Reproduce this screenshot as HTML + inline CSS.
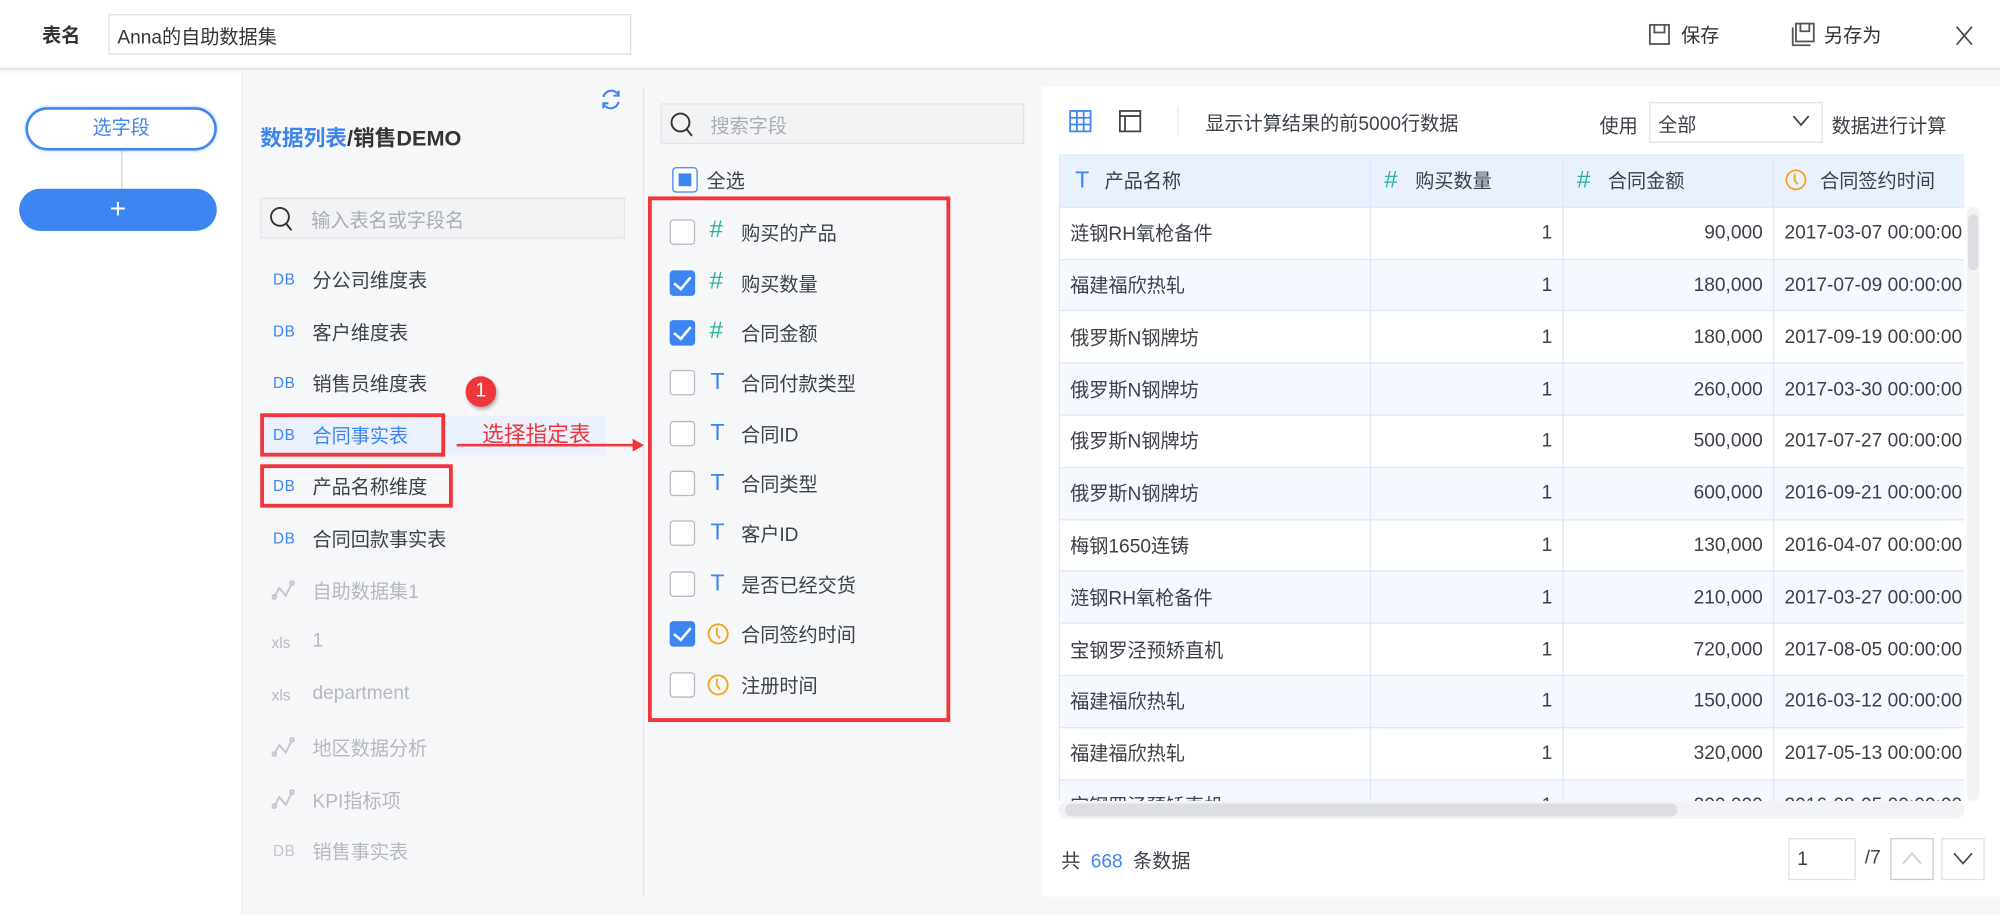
<!DOCTYPE html>
<html><head><meta charset="utf-8"><style>
*{margin:0;padding:0;box-sizing:border-box}
html,body{width:2000px;height:915px;overflow:hidden;background:#fff}
#w{position:absolute;left:0;top:0;width:1568px;height:717px;transform:scale(1.27551);transform-origin:0 0;font-family:"Liberation Sans","Noto Sans CJK SC",sans-serif;color:#3c4048;font-size:15px;background:#f6f7f9}
.a{position:absolute;white-space:nowrap}
.hdr{left:0;top:0;width:1568px;height:55px;background:#fff;border-bottom:2px solid #e6e7ea}
.ck{position:absolute;width:20px;height:20px;border:1.5px solid #b5b9c2;border-radius:3px;background:#fff}
.ck.on{background:#3d85f0;border-color:#3d85f0}
.ck.on::after{content:"";position:absolute;left:5px;top:1px;width:6px;height:11px;border-right:2.5px solid #fff;border-bottom:2.5px solid #fff;transform:rotate(40deg)}
.db{color:#3d85f0;font-size:12px;letter-spacing:0.5px}
.gray{color:#b5b8be}
.hs{color:#28b39a;font-size:19px;font-style:italic}
.tt{color:#3d85f0;font-size:18px}
table{border-collapse:collapse;table-layout:fixed}
td,th{border:1.5px solid #dbe7fa;height:40.8px;padding:0 8px;font-weight:normal;font-size:15px;white-space:nowrap;overflow:hidden}
th{background:#e8f1fd;text-align:left}
tr:nth-child(odd) td{background:#f5f8fe}
.r{text-align:right}
.red{border:3px solid #f0363a;position:absolute}
</style></head><body><div id="w">
<div class="a hdr"></div>
<div class="a" style="left:33px;top:17px;font-weight:bold;font-size:15px;color:#333">表名</div>
<div class="a" style="left:85px;top:11px;width:410px;height:32px;border:1px solid #dfe1e5;background:#fff;padding:6px 6px;font-size:15px;color:#333">Anna的自助数据集</div>
<svg class="a" style="left:1292px;top:18px" width="18" height="18" viewBox="0 0 18 18" fill="none" stroke="#555" stroke-width="1.4"><rect x="1.5" y="1.5" width="15" height="15"/><path d="M5 1.5v6h8v-6"/></svg>
<div class="a" style="left:1318px;top:17px;color:#333">保存</div>
<svg class="a" style="left:1404px;top:17px" width="20" height="20" viewBox="0 0 20 20" fill="none" stroke="#555" stroke-width="1.4"><rect x="4" y="1.5" width="14" height="14"/><path d="M1.5 4.5v14h14"/><path d="M7.5 1.5v6h7v-6"/></svg>
<div class="a" style="left:1430px;top:17px;color:#333">另存为</div>
<svg class="a" style="left:1533px;top:20px" width="14" height="16" viewBox="0 0 14 16" fill="none" stroke="#444" stroke-width="1.3"><path d="M1 1l12 14M13 1L1 15"/></svg>

<div class="a" style="left:0;top:57px;width:190px;height:660px;background:#fff;border-right:1px solid #eceef1"></div>
<div class="a" style="left:20px;top:84px;width:150px;height:34px;border:2px solid #3d85f0;border-radius:17px;background:#fff;color:#3d85f0;text-align:center;line-height:30px;box-shadow:0 0 3px #9bc0f5">选字段</div>
<div class="a" style="left:95px;top:118px;width:1px;height:30px;background:#d0d3d8"></div>
<div class="a" style="left:15px;top:148px;width:155px;height:33px;border-radius:17px;background:#3d85f0;color:#fff;text-align:center;line-height:31px;font-size:22px">+</div>

<div class="a" style="left:204px;top:94px;font-weight:bold;font-size:17px;color:#333"><span style="color:#3d85f0">数据列表</span>/销售DEMO</div>
<svg class="a" style="left:470px;top:69px" width="18" height="18" viewBox="0 0 18 18" fill="none" stroke="#3d85f0" stroke-width="1.6"><path d="M3 7a6.5 6.5 0 0 1 12-1.5"/><path d="M15 2v4h-4"/><path d="M15 11a6.5 6.5 0 0 1-12 1.5"/><path d="M3 16v-4h4"/></svg>
<div class="a" style="left:504px;top:68px;width:1px;height:635px;background:#e4e6ea"></div>

<div class="a" style="left:204px;top:155px;width:286px;height:32px;border:1px solid #e2e4e8;background:#f2f3f5"></div>
<svg class="a" style="left:211px;top:161px" width="20" height="22" viewBox="0 0 20 22" fill="none" stroke="#333" stroke-width="1.5"><circle cx="8.5" cy="9" r="7"/><path d="M13.5 14.5l4 5"/></svg>
<div class="a gray" style="left:244px;top:162px;color:#a9adb4">输入表名或字段名</div>

<div class="a" style="left:205px;top:326px;width:270px;height:31px;background:#eaf1fc"></div>
<div class="a db" style="left:214px;top:212px">DB</div><div class="a" style="left:245px;top:209px">分公司维度表</div>
<div class="a db" style="left:214px;top:253px">DB</div><div class="a" style="left:245px;top:250px">客户维度表</div>
<div class="a db" style="left:214px;top:293px">DB</div><div class="a" style="left:245px;top:290px">销售员维度表</div>
<div class="a db" style="left:214px;top:334px">DB</div><div class="a" style="left:245px;top:331px;color:#3d85f0">合同事实表</div>
<div class="a db" style="left:214px;top:374px">DB</div><div class="a" style="left:245px;top:371px">产品名称维度</div>
<div class="a db" style="left:214px;top:415px">DB</div><div class="a" style="left:245px;top:412px">合同回款事实表</div>
<svg class="a" style="left:213px;top:455px" width="18" height="16" viewBox="0 0 18 16" fill="none" stroke="#c3c6cc" stroke-width="1.5"><path d="M2 13L6 6l5 6 5-10"/><circle cx="2" cy="13" r="1.5"/><circle cx="16" cy="2" r="1.5"/></svg><div class="a gray" style="left:245px;top:453px">自助数据集1</div>
<div class="a gray" style="left:213px;top:497px;font-size:12px">xls</div><div class="a gray" style="left:245px;top:494px">1</div>
<div class="a gray" style="left:213px;top:538px;font-size:12px">xls</div><div class="a gray" style="left:245px;top:535px">department</div>
<svg class="a" style="left:213px;top:578px" width="18" height="16" viewBox="0 0 18 16" fill="none" stroke="#c3c6cc" stroke-width="1.5"><path d="M2 13L6 6l5 6 5-10"/><circle cx="2" cy="13" r="1.5"/><circle cx="16" cy="2" r="1.5"/></svg><div class="a gray" style="left:245px;top:576px">地区数据分析</div>
<svg class="a" style="left:213px;top:619px" width="18" height="16" viewBox="0 0 18 16" fill="none" stroke="#c3c6cc" stroke-width="1.5"><path d="M2 13L6 6l5 6 5-10"/><circle cx="2" cy="13" r="1.5"/><circle cx="16" cy="2" r="1.5"/></svg><div class="a gray" style="left:245px;top:617px">KPI指标项</div>
<div class="a db" style="left:214px;top:660px;color:#c3c6cc">DB</div><div class="a gray" style="left:245px;top:657px">销售事实表</div>

<div class="red" style="left:204px;top:324px;width:145px;height:34px"></div>
<div class="red" style="left:204px;top:364px;width:151px;height:34px"></div>
<div class="a" style="left:365px;top:295px;width:24px;height:24px;border-radius:50%;background:#f0363a;color:#fff;text-align:center;line-height:24px;font-size:16px;box-shadow:1px 2px 3px rgba(0,0,0,.3)">1</div>
<div class="a" style="left:378px;top:326px;color:#f0363a;font-size:17px">选择指定表</div>
<div class="a" style="left:358px;top:348px;width:140px;height:2px;background:#f0363a"></div>
<div class="a" style="left:496px;top:344px;width:0;height:0;border-left:9px solid #f0363a;border-top:5px solid transparent;border-bottom:5px solid transparent"></div>

<div class="a" style="left:518px;top:81px;width:285px;height:32px;border:1px solid #e2e4e8;background:#f2f3f5"></div>
<svg class="a" style="left:525px;top:87px" width="20" height="22" viewBox="0 0 20 22" fill="none" stroke="#333" stroke-width="1.5"><circle cx="8.5" cy="9" r="7"/><path d="M13.5 14.5l4 5"/></svg>
<div class="a" style="left:557px;top:88px;color:#a9adb4">搜索字段</div>
<div class="ck" style="left:527px;top:131px;border-color:#3d85f0"><div style="position:absolute;left:3.5px;top:3.5px;width:10px;height:10px;background:#3d85f0"></div></div>
<div class="a" style="left:554px;top:131px">全选</div>
<div class="red" style="left:508px;top:154px;width:237px;height:412px"></div>

<div class="a" style="left:817px;top:68px;width:751px;height:635px;background:#fff"></div>
<svg class="a" style="left:838px;top:86px" width="18" height="18" viewBox="0 0 18 18" fill="none" stroke="#3d85f0" stroke-width="1.4"><rect x="1" y="1" width="16" height="16"/><path d="M6.3 1v16M11.6 1v16M1 6.3h16M1 11.6h16"/></svg>
<svg class="a" style="left:877px;top:86px" width="18" height="18" viewBox="0 0 18 18" fill="none" stroke="#444" stroke-width="1.4"><rect x="1" y="1" width="16" height="16"/><path d="M1 5h16M5 5v12"/></svg>
<div class="a" style="left:923px;top:84px;width:1px;height:22px;background:#e4e6ea"></div>
<div class="a" style="left:945px;top:86px;font-size:15px">显示计算结果的前5000行数据</div>
<div class="a" style="left:1254px;top:88px">使用</div>
<div class="a" style="left:1293px;top:80px;width:136px;height:32px;border:1px solid #dfe1e5;padding:6px 6px">全部</div>
<svg class="a" style="left:1405px;top:90px" width="14" height="10" viewBox="0 0 14 10" fill="none" stroke="#444" stroke-width="1.4"><path d="M1 1l6 7 6-7"/></svg>
<div class="a" style="left:1436px;top:88px">数据进行计算</div>

<div class="a" style="left:830px;top:121px;width:710px;height:507px;overflow:hidden">
<table style="width:720px">
<colgroup><col style="width:244px"><col style="width:151px"><col style="width:165px"><col style="width:160px"></colgroup>
<tr><th><span class="tt" style="margin:0 12px 0 4px">T</span>产品名称</th><th><span class="hs" style="margin:0 14px 0 2px">#</span>购买数量</th><th><span class="hs" style="margin:0 14px 0 2px">#</span>合同金额</th><th><svg width="18" height="18" viewBox="0 0 18 18" fill="none" stroke="#f5a623" stroke-width="1.5" style="vertical-align:-3px;margin-right:10px"><circle cx="9" cy="9" r="7.5"/><path d="M8 4v5.5l2.5 3"/></svg>合同签约时间</th></tr>
<tr><td>涟钢RH氧枪备件</td><td class="r">1</td><td class="r">90,000</td><td>2017-03-07 00:00:00</td></tr>
<tr><td>福建福欣热轧</td><td class="r">1</td><td class="r">180,000</td><td>2017-07-09 00:00:00</td></tr>
<tr><td>俄罗斯N钢牌坊</td><td class="r">1</td><td class="r">180,000</td><td>2017-09-19 00:00:00</td></tr>
<tr><td>俄罗斯N钢牌坊</td><td class="r">1</td><td class="r">260,000</td><td>2017-03-30 00:00:00</td></tr>
<tr><td>俄罗斯N钢牌坊</td><td class="r">1</td><td class="r">500,000</td><td>2017-07-27 00:00:00</td></tr>
<tr><td>俄罗斯N钢牌坊</td><td class="r">1</td><td class="r">600,000</td><td>2016-09-21 00:00:00</td></tr>
<tr><td>梅钢1650连铸</td><td class="r">1</td><td class="r">130,000</td><td>2016-04-07 00:00:00</td></tr>
<tr><td>涟钢RH氧枪备件</td><td class="r">1</td><td class="r">210,000</td><td>2017-03-27 00:00:00</td></tr>
<tr><td>宝钢罗泾预矫直机</td><td class="r">1</td><td class="r">720,000</td><td>2017-08-05 00:00:00</td></tr>
<tr><td>福建福欣热轧</td><td class="r">1</td><td class="r">150,000</td><td>2016-03-12 00:00:00</td></tr>
<tr><td>福建福欣热轧</td><td class="r">1</td><td class="r">320,000</td><td>2017-05-13 00:00:00</td></tr>
<tr><td>宝钢罗泾预矫直机</td><td class="r">1</td><td class="r">200,000</td><td>2016-08-05 00:00:00</td></tr>
</table></div>
<div class="a" style="left:1542px;top:162px;width:10px;height:466px;background:#f2f3f5;border-radius:5px"></div>
<div class="a" style="left:1543px;top:168px;width:8px;height:44px;background:#dcdee2;border-radius:4px"></div>
<div class="a" style="left:830px;top:628px;width:710px;height:14px;background:#f2f3f5;border-radius:7px"></div>
<div class="a" style="left:835px;top:630px;width:480px;height:10px;background:#dcdee2;border-radius:5px"></div>

<div class="a" style="left:832px;top:664px">共 <span style="color:#3d85f0;margin:0 4px">668</span> 条数据</div>
<div class="a" style="left:1402px;top:657px;width:53px;height:33px;border:1px solid #dfe1e5;padding:7px 6px;background:#fff">1</div>
<div class="a" style="left:1462px;top:664px">/7</div>
<div class="a" style="left:1482px;top:657px;width:34px;height:33px;border:1px solid #c8cbd0;background:#fff"></div>
<svg class="a" style="left:1491px;top:668px" width="16" height="10" viewBox="0 0 16 10" fill="none" stroke="#c8cbd0" stroke-width="1.3"><path d="M1 9l7-8 7 8"/></svg>
<div class="a" style="left:1522px;top:657px;width:34px;height:33px;border:1px solid #dfe1e5;background:#fff"></div>
<svg class="a" style="left:1531px;top:668px" width="16" height="10" viewBox="0 0 16 10" fill="none" stroke="#444" stroke-width="1.3"><path d="M1 1l7 8 7-8"/></svg>

<div class="ck" style="left:525px;top:172px"></div><div class="a hs" style="left:556px;top:170px">#</div><div class="a" style="left:581px;top:172px">购买的产品</div>
<div class="ck on" style="left:525px;top:212px"></div><div class="a hs" style="left:556px;top:210px">#</div><div class="a" style="left:581px;top:212px">购买数量</div>
<div class="ck on" style="left:525px;top:251px"></div><div class="a hs" style="left:556px;top:249px">#</div><div class="a" style="left:581px;top:251px">合同金额</div>
<div class="ck" style="left:525px;top:290px"></div><div class="a tt" style="left:557px;top:289px">T</div><div class="a" style="left:581px;top:290px">合同付款类型</div>
<div class="ck" style="left:525px;top:330px"></div><div class="a tt" style="left:557px;top:329px">T</div><div class="a" style="left:581px;top:330px">合同ID</div>
<div class="ck" style="left:525px;top:369px"></div><div class="a tt" style="left:557px;top:368px">T</div><div class="a" style="left:581px;top:369px">合同类型</div>
<div class="ck" style="left:525px;top:408px"></div><div class="a tt" style="left:557px;top:407px">T</div><div class="a" style="left:581px;top:408px">客户ID</div>
<div class="ck" style="left:525px;top:448px"></div><div class="a tt" style="left:557px;top:447px">T</div><div class="a" style="left:581px;top:448px">是否已经交货</div>
<div class="ck on" style="left:525px;top:487px"></div><svg class="a" style="left:554px;top:488px" width="18" height="18" viewBox="0 0 18 18" fill="none" stroke="#f5a623" stroke-width="1.5"><circle cx="9" cy="9" r="7.5"/><path d="M8 4v5.5l2.5 3"/></svg><div class="a" style="left:581px;top:487px">合同签约时间</div>
<div class="ck" style="left:525px;top:527px"></div><svg class="a" style="left:554px;top:528px" width="18" height="18" viewBox="0 0 18 18" fill="none" stroke="#f5a623" stroke-width="1.5"><circle cx="9" cy="9" r="7.5"/><path d="M8 4v5.5l2.5 3"/></svg><div class="a" style="left:581px;top:527px">注册时间</div>
</div></body></html>
